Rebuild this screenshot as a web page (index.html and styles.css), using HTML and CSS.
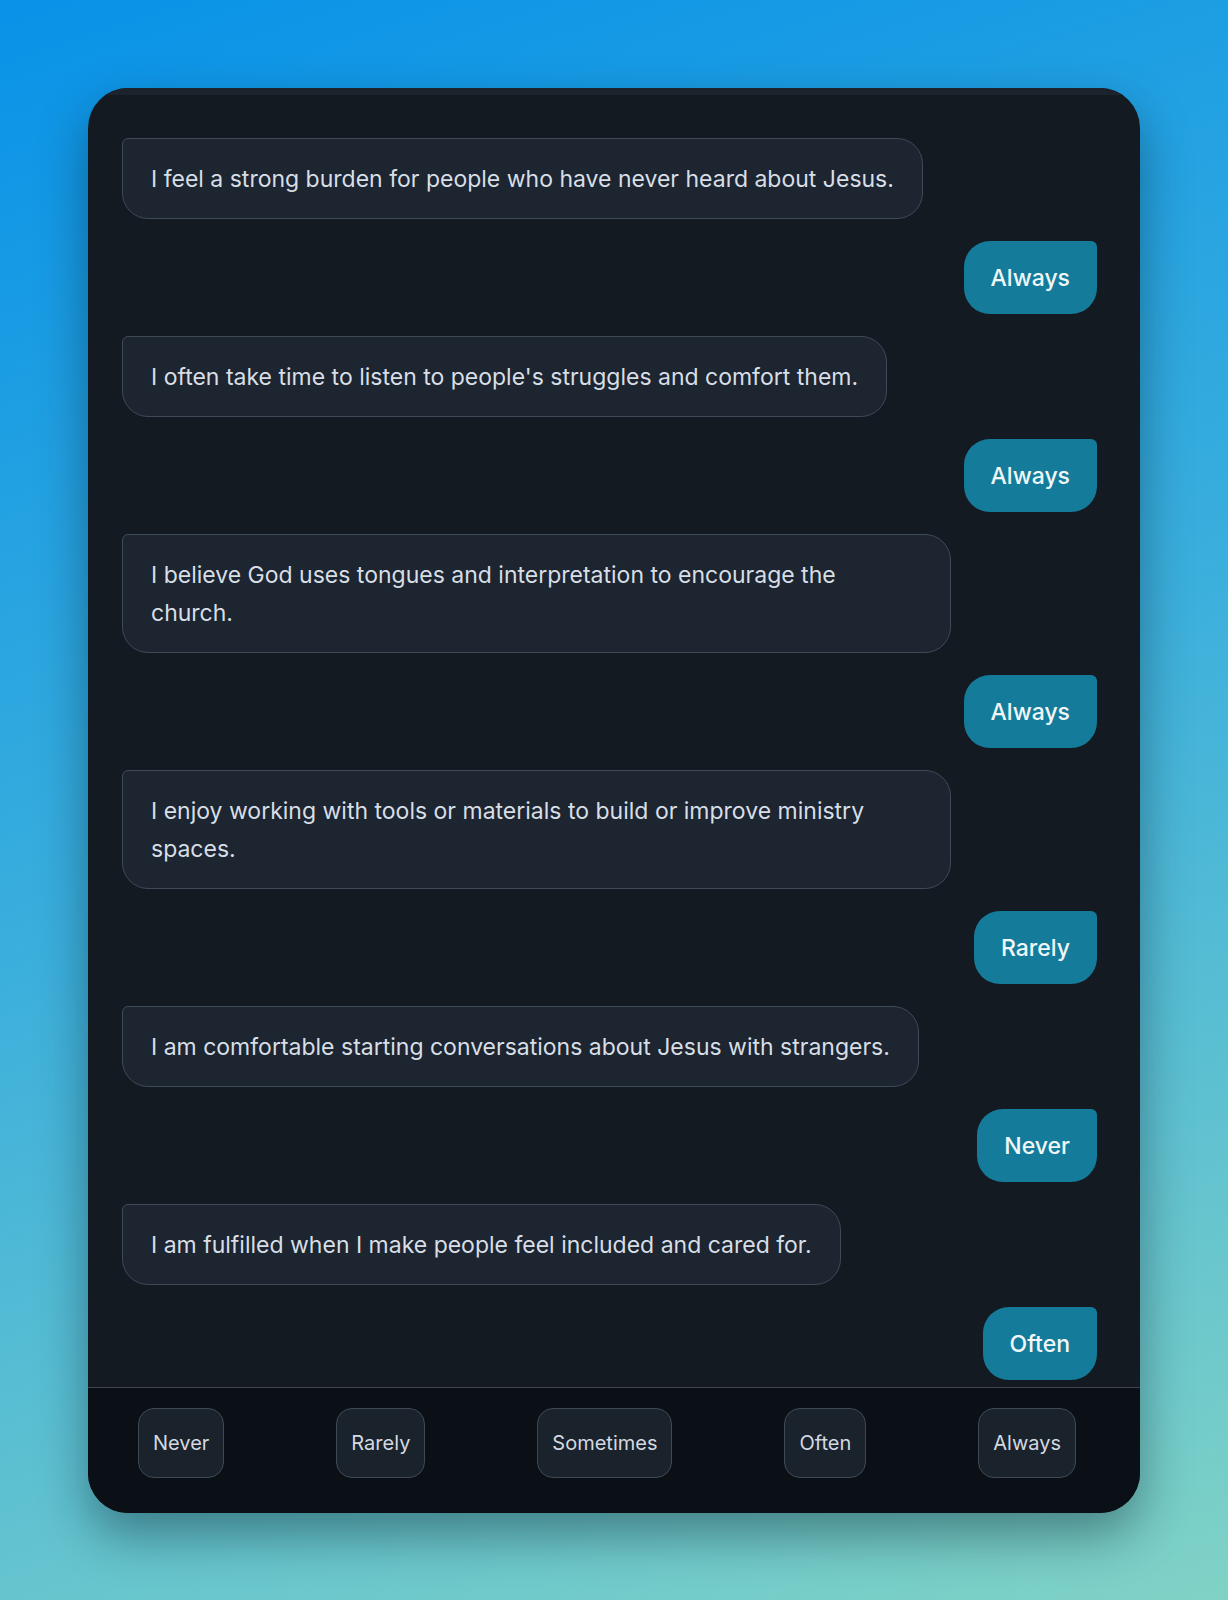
FILE: index.html
```html
<!DOCTYPE html>
<html>
<head>
  <title>Spiritual Gifts Quiz</title>
  <link rel="stylesheet" href="styles.css">
</head>
<body>
  <div class="chat-card">
    <div class="chat-top"></div>

    <div class="messages">
      <div class="msg question">I feel a strong burden for people who have never heard about Jesus.</div>
      <div class="msg answer">Always</div>

      <div class="msg question">I often take time to listen to people's struggles and comfort them.</div>
      <div class="msg answer">Always</div>

      <div class="msg question">I believe God uses tongues and interpretation to encourage the church.</div>
      <div class="msg answer">Always</div>

      <div class="msg question">I enjoy working with tools or materials to build or improve ministry spaces.</div>
      <div class="msg answer">Rarely</div>

      <div class="msg question">I am comfortable starting conversations about Jesus with strangers.</div>
      <div class="msg answer">Never</div>

      <div class="msg question">I am fulfilled when I make people feel included and cared for.</div>
      <div class="msg answer">Often</div>
    </div>

    <div class="choices">
      <button class="choice">Never</button>
      <button class="choice">Rarely</button>
      <button class="choice">Sometimes</button>
      <button class="choice">Often</button>
      <button class="choice">Always</button>
    </div>
  </div>
</body>
</html>
```

FILE: styles.css
```css
html {
  min-height: 100%;
}

body {
  margin: 0;
  min-height: 1600px;
  font-family: Inter, "Open Sans", sans-serif;
  background: linear-gradient(162deg, #0892e8 0%, #3db0dc 50%, #80d2c5 100%);
  padding-top: 88px;
  box-sizing: border-box;
}

.chat-card {
  width: 1052px;
  margin: 0 auto;
  background-color: #141a21;
  border-radius: 40px;
  overflow: hidden;
  box-shadow: 0 22px 50px rgba(0, 20, 30, 0.4);
}

.chat-top {
  height: 7px;
  background-color: #1c232c;
}

.messages {
  display: flex;
  flex-direction: column;
  gap: 22px;
  padding: 43px 43px 7px 34px;
}

.msg {
  max-width: 85%;
  box-sizing: border-box;
  font-size: 23px;
  line-height: 38px;
}

.question {
  align-self: flex-start;
  padding: 20.5px 28px;
  background-color: #1c2530;
  border: 1px solid #3f4a58;
  border-radius: 6px 26px 26px 26px;
  color: #d8dee6;
  font-weight: 400;
}

.answer {
  align-self: flex-end;
  padding: 17.5px 27px;
  background-color: #147c9a;
  border-radius: 26px 6px 26px 26px;
  color: #f1f7f9;
  font-weight: 500;
}

.choices {
  display: flex;
  justify-content: space-between;
  align-items: center;
  padding: 20px 64px 35px 50px;
  background-color: #0a1016;
  border-top: 1px solid #3a4550;
}

.choice {
  height: 70px;
  padding: 0 14px;
  background-color: #1a222c;
  border: 1px solid #3f4955;
  border-radius: 16px;
  color: #d3d9e0;
  font-family: Inter, "Open Sans", sans-serif;
  font-size: 20px;
}
```
